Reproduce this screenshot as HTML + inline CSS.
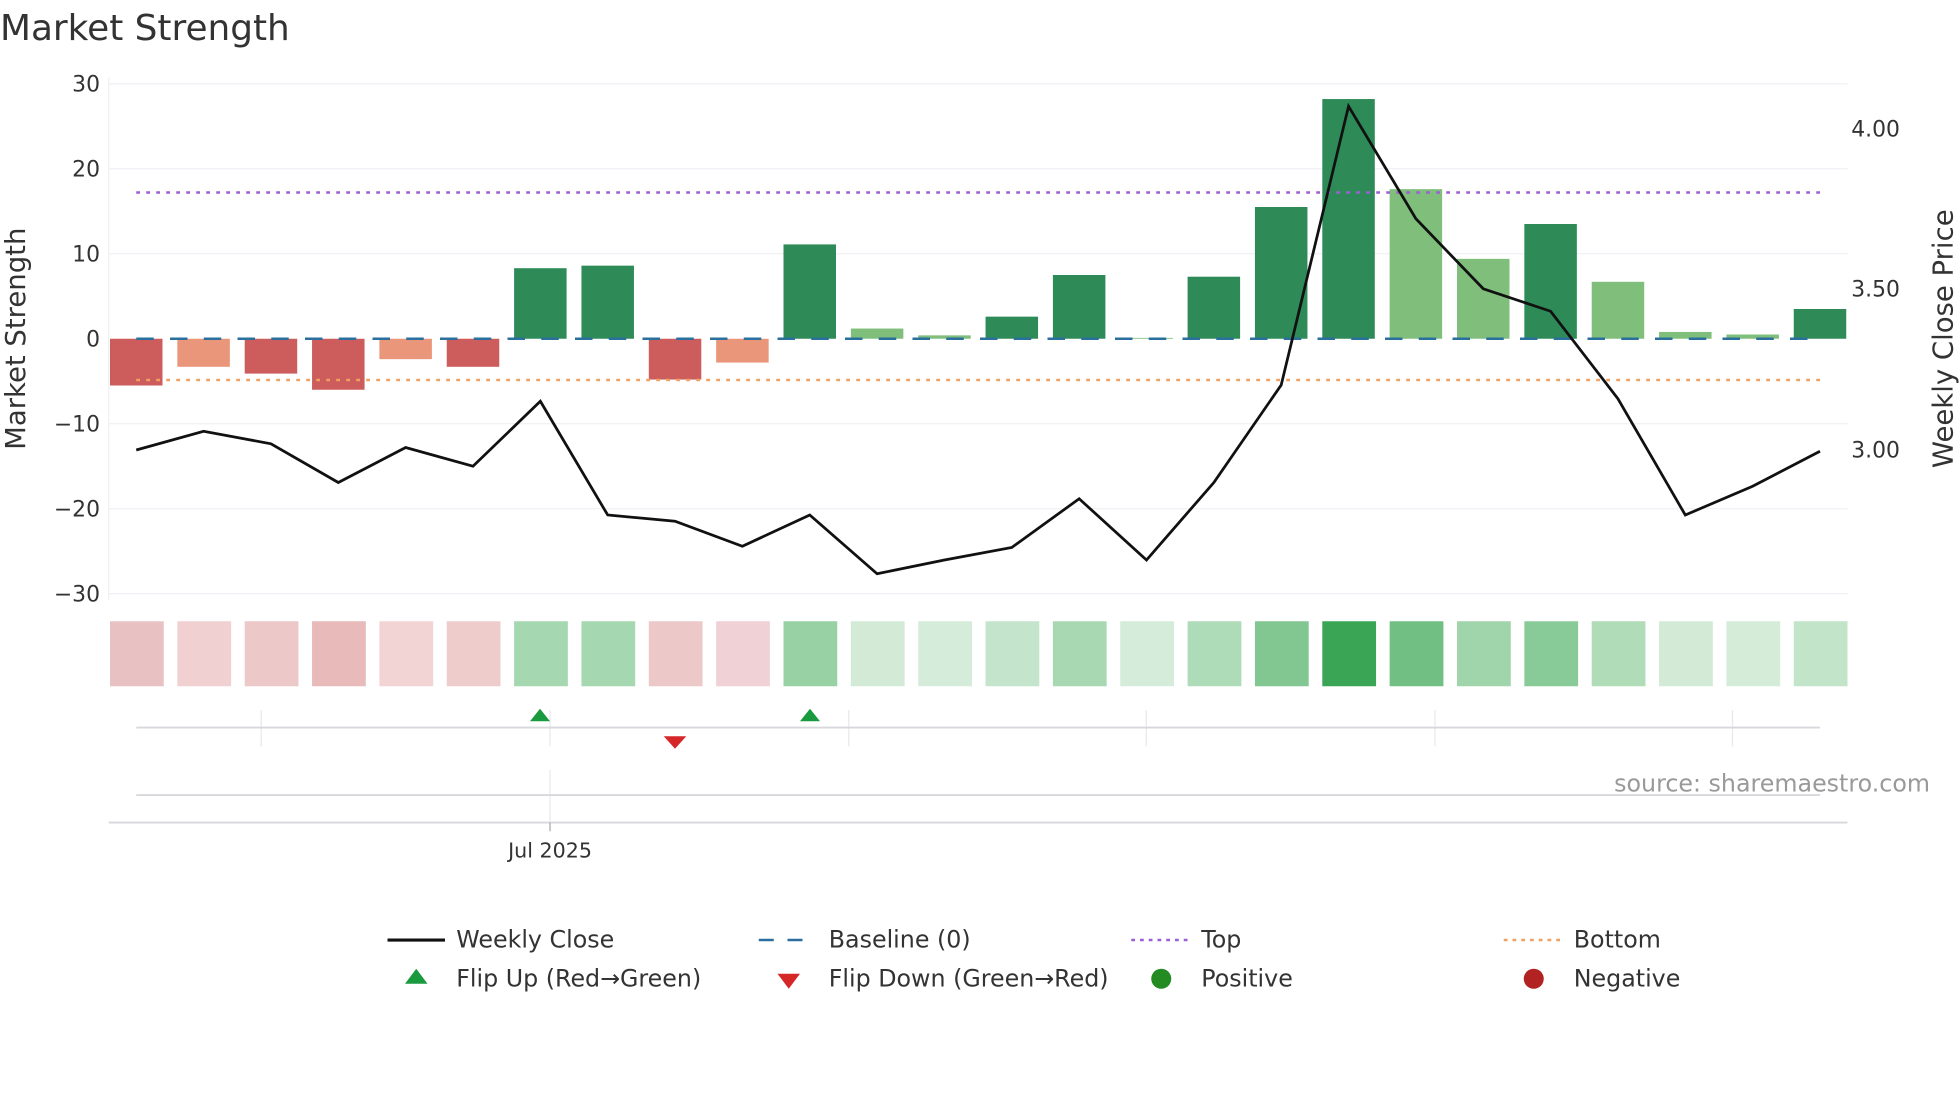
<!DOCTYPE html>
<html><head><meta charset="utf-8"><style>
html,body{margin:0;padding:0;background:#fff;width:1960px;height:1102px;overflow:hidden}
svg text{font-family:"DejaVu Sans","Liberation Sans",sans-serif}
</style></head><body>
<svg width="1960" height="1102" viewBox="0 0 1568 881.6" xmlns="http://www.w3.org/2000/svg">
<text x="0" y="32" font-size="28.7" fill="#333">Market Strength</text>
<g stroke="#eef0f4" stroke-width="1">
<line x1="87" x2="1478" y1="67" y2="67"/><line x1="87" x2="1478" y1="135" y2="135"/>
<line x1="87" x2="1478" y1="203" y2="203"/><line x1="87" x2="1478" y1="339" y2="339"/>
<line x1="87" x2="1478" y1="407" y2="407"/><line x1="87" x2="1478" y1="475" y2="475"/>
<line x1="87" x2="87" y1="62" y2="480"/>
</g>
<g font-size="17.5" fill="#333" text-anchor="end">
<text x="80" y="73">30</text><text x="80" y="141">20</text><text x="80" y="209">10</text>
<text x="80" y="277">0</text><text x="80" y="345">−10</text><text x="80" y="413">−20</text><text x="80" y="481">−30</text>
</g>
<g font-size="17.5" fill="#333">
<text x="1481" y="109">4.00</text><text x="1481" y="237">3.50</text><text x="1481" y="366">3.00</text>
</g>
<text transform="translate(20,271) rotate(-90)" font-size="22" fill="#333" text-anchor="middle">Market Strength</text>
<text transform="translate(1562,271) rotate(-90)" font-size="22" fill="#333" text-anchor="middle">Weekly Close Price</text>
<g id="bars"></g>
<line x1="109" x2="1456" y1="271" y2="271" stroke="#2a6f9e" stroke-width="2" stroke-dasharray="14,13"/>
<line x1="109" x2="1456" y1="154" y2="154" stroke="#9b5fd6" stroke-width="2" stroke-dasharray="3,5"/>
<line x1="109" x2="1456" y1="304" y2="304" stroke="#f0a060" stroke-width="2" stroke-dasharray="3,5"/>
<polyline id="pl" fill="none" stroke="#111" stroke-width="2.2" points=""/>
<g id="heat"></g>
<g stroke="#e6e8ec" stroke-width="1">
<line x1="209" x2="209" y1="568" y2="597"/><line x1="440" x2="440" y1="568" y2="597"/>
<line x1="679" x2="679" y1="568" y2="597"/><line x1="917" x2="917" y1="568" y2="597"/>
<line x1="1148" x2="1148" y1="568" y2="597"/><line x1="1386" x2="1386" y1="568" y2="597"/>
<line x1="440" x2="440" y1="616" y2="658"/>
</g>
<line x1="109" x2="1456" y1="582" y2="582" stroke="#d6d8dc" stroke-width="1.5"/>
<line x1="109" x2="1456" y1="636" y2="636" stroke="#d6d8dc" stroke-width="1.5"/>
<line x1="87" x2="1478" y1="658" y2="658" stroke="#d6d8dc" stroke-width="1.5"/>
<line x1="440" x2="440" y1="658" y2="665" stroke="#aaa" stroke-width="1"/>
<text x="440" y="686" font-size="16.5" fill="#333" text-anchor="middle">Jul 2025</text>
<polygon points="424,577 440,577 432,567" fill="#1a9a3e"/>
<polygon points="640,577 656,577 648,567" fill="#1a9a3e"/>
<polygon points="531,589 549,589 540,599" fill="#d62728"/>
<text x="1544" y="633" font-size="19" fill="#999" text-anchor="end">source: sharemaestro.com</text>
<g font-size="19" fill="#333">
<line x1="310" x2="356" y1="752" y2="752" stroke="#111" stroke-width="2.5"/>
<text x="365" y="758">Weekly Close</text>
<line x1="607" x2="652" y1="752" y2="752" stroke="#2a6f9e" stroke-width="2" stroke-dasharray="12,11"/>
<text x="663" y="758">Baseline (0)</text>
<line x1="905" x2="950" y1="752" y2="752" stroke="#9b5fd6" stroke-width="2" stroke-dasharray="3,4"/>
<text x="961" y="758">Top</text>
<line x1="1203" x2="1248" y1="752" y2="752" stroke="#f0a060" stroke-width="2" stroke-dasharray="3,4"/>
<text x="1259" y="758">Bottom</text>
<polygon points="324,787 342,787 333,775" fill="#1a9a3e"/>
<text x="365" y="789">Flip Up (Red→Green)</text>
<polygon points="622,779 640,779 631,791" fill="#d62728"/>
<text x="663" y="789">Flip Down (Green→Red)</text>
<circle cx="929" cy="783" r="8" fill="#228b22"/>
<text x="961" y="789">Positive</text>
<circle cx="1227" cy="783" r="8" fill="#b22222"/>
<text x="1259" y="789">Negative</text>
</g>
</svg>
<script>
var vals=[-5.5,-3.3,-4.1,-6,-2.4,-3.3,8.3,8.6,-4.8,-2.8,11.1,1.2,0.4,2.6,7.5,0.1,7.3,15.5,28.2,17.6,9.4,13.5,6.7,0.8,0.5,3.5];
var typ=['r','s','r','r','s','r','g','g','r','s','g','l','l','g','g','l','g','g','g','l','l','g','l','l','l','g'];
var col={r:'#cd5c5c',s:'#e9967a',g:'#2e8b57',l:'#7fbf7b'};
var heat=['#e8c2c2','#f0d0d0','#edc8c8','#e8baba','#f2d4d4','#efcccc','#a5d8b0','#a5d8b0','#ecc8c8','#f0d2d6','#98d2a4','#d2ead6','#d6ecda','#c4e4cb','#a8d8b2','#d4ecd9','#afdcb8','#82c692','#3aa655','#72bf84','#a0d4aa','#88ca98','#b0dcb8','#d2ead6','#d4ecd8','#c2e4c9'];
var py=[360,345,355,386,358,373,321,412,417,437,412,459,448,438,399,448,386,308,85,175,231,249,319,412,389,361];
var ns='http://www.w3.org/2000/svg',b=document.getElementById('bars'),h=document.getElementById('heat'),pts=[];
for(var i=0;i<26;i++){var cx=109+i*53.88;
var r=document.createElementNS(ns,'rect');var v=vals[i];var y0=271,y1=271-v*6.8;
r.setAttribute('x',cx-21);r.setAttribute('width',42);r.setAttribute('y',Math.min(y0,y1));r.setAttribute('height',Math.abs(y1-y0));r.setAttribute('fill',col[typ[i]]);b.appendChild(r);
var q=document.createElementNS(ns,'rect');q.setAttribute('x',cx-21);q.setAttribute('width',43);q.setAttribute('y',497);q.setAttribute('height',52);q.setAttribute('fill',heat[i]);h.appendChild(q);
pts.push(cx+','+py[i]);}
document.getElementById('pl').setAttribute('points',pts.join(' '));
</script>
</body></html>
